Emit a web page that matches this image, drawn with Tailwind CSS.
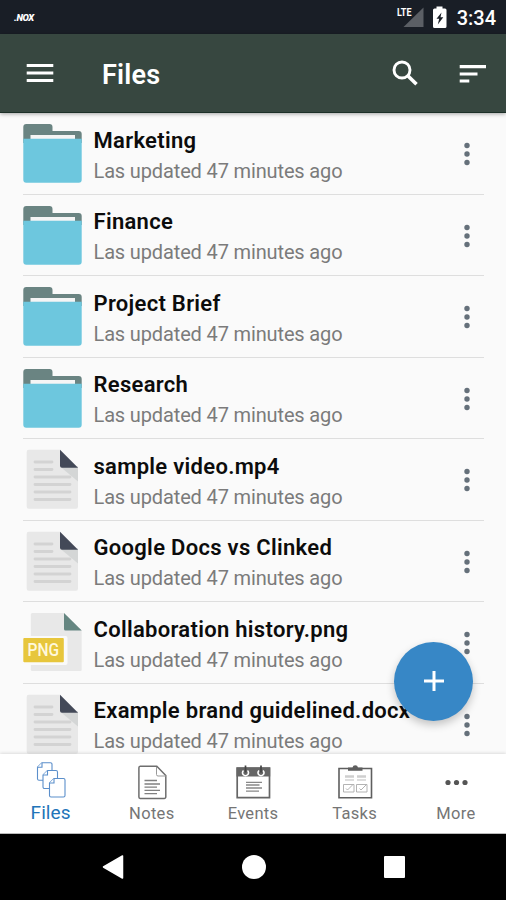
<!DOCTYPE html>
<html lang="en">
<head>
  <meta charset="UTF-8" />
  <meta name="viewport" content="width=device-width, initial-scale=1.0" />
  <title>Files</title>
  <script src="https://cdn.jsdelivr.net/npm/@tailwindcss/browser@4"></script>
</head>

<body class="bg-black">

<!-- shared file icons -->
<svg class="hidden">
  <symbol id="folder" viewBox="0 0 60 60">
    <path d="M.3 20V4a3 3 0 0 1 3-3H26.500a3 3 0 0 1 3 3v4H55.700a3 3 0 0 1 3 3v9z" fill="#6a8482" />
    <path d="M7.500 12H52v6H7.500z" fill="#f5f5f5" />
    <path d="M.3 15.800H58.700V56.700a3 3 0 0 1-3 3H3.300a3 3 0 0 1-3-3z" fill="#6dc7de" />
  </symbol>
  <symbol id="doc" viewBox="0 0 60 60">
    <path d="M5.700.700H37L55 18.700V57.700a2 2 0 0 1-2 2H5.700a2 2 0 0 1-2-2v-55a2 2 0 0 1 2-2z" fill="#e8e8e8" />
    <path d="M37 17.500H55V32.500z" fill="#d4d6d6" />
    <path d="M37 .7 55 18.700H39a2 2 0 0 1-2-2z" fill="#434958" />
    <path d="M12 13h17M12 20.500h17M12 28h35M12 35.500h35M12 43h35M12 50.500h35" stroke="#d3d3d3" stroke-width="2.800" stroke-linecap="round" />
  </symbol>
  <symbol id="png" viewBox="0 0 60 60">
    <path d="M9.300.900H41L58.700 18.600V57.500a1.500 1.500 0 0 1-1.500 1.500H9.300a1.500 1.500 0 0 1-1.500-1.500V2.400A1.500 1.500 0 0 1 9.300.900z" fill="#e8e8e8" />
    <path d="M41 .9 58.700 18.600H42.500a1.500 1.500 0 0 1-1.500-1.500z" fill="#658681" />
    <path d="M0 24H42.500a2 2 0 0 1 2 2V51a2 2 0 0 1-2 2H0z" fill="#fafafa" />
    <rect x=".3" y="26" width="40.500" height="24.200" rx="1" fill="#e7c63c" />
    <text x="4.500" y="44.300" textLength="31.500" lengthAdjust="spacingAndGlyphs" font-family="Roboto, sans-serif" font-size="17.500" font-weight="500" fill="#fff8dc">PNG</text>
  </symbol>
</svg>

<div class="w-[506px] h-[900px] flex flex-col overflow-hidden relative bg-[#fafafa] font-[Roboto,sans-serif]">

  <!-- status bar -->
  <div class="h-[34px] shrink-0 bg-[#191e26] flex items-center text-white pl-[14px] pr-[10px]">
    <span class="text-[9.5px] font-black italic leading-none tracking-[-0.4px] pt-px">.NOX</span>
    <svg class="ml-auto" width="29" height="34" viewBox="0 0 29 34">
      <path d="M27.500 7.500V27H7.500z" fill="#5b5f65" />
      <text x="1" y="16" textLength="14.500" lengthAdjust="spacingAndGlyphs" font-family="Roboto, sans-serif" font-size="11.500" font-weight="700" fill="#fff">LTE</text>
    </svg>
    <svg class="ml-[7px]" width="16" height="34" viewBox="0 0 16 34">
      <path d="M4.500 6.500h6v2H13a1.500 1.500 0 0 1 1.500 1.500v16.500A1.500 1.500 0 0 1 13 28H2.500A1.500 1.500 0 0 1 1 26.500V10a1.500 1.500 0 0 1 1.500-1.500h2z" fill="#fff" />
      <path d="M9.500 12.500 4.500 18.700H7.200L5.800 24.500 11.300 17.200H8.500z" fill="#191e26" />
    </svg>
    <span class="ml-[9px] text-[20px] font-medium leading-none pt-0.5">3:34</span>
  </div>

  <!-- app bar -->
  <header class="h-[79px] shrink-0 bg-[#374740] border-b border-[#1d3028] shadow-[0_1px_4px_rgba(0,0,0,0.35)] relative flex items-center text-white">
    <svg class="ml-[26px]" width="28" height="24" viewBox="0 0 28 24">
      <path d="M.7 4.500H27.300M.7 12H27.300M.7 19.500H27.300" stroke="#fff" stroke-width="3" />
    </svg>
    <h1 class="ml-[48px] text-[27px] font-semibold leading-none tracking-[0.2px] pt-[5px]">Files</h1>
    <svg class="ml-auto mt-0.5" width="30" height="30" viewBox="0 0 30 30">
      <circle cx="11" cy="11" r="8" fill="none" stroke="#fff" stroke-width="2.900" />
      <path d="m16.800 16.800 8.700 8.400" stroke="#fff" stroke-width="3.600" />
    </svg>
    <svg class="ml-[38px] mr-[19px] mt-px" width="28" height="24" viewBox="0 0 28 24">
      <path d="M.7 4.700H27M.7 12H18.500M.7 19H10.300" stroke="#fff" stroke-width="3.200" />
    </svg>
  </header>

  <!-- file list -->
  <main id="fileList" class="h-[641px] shrink-0 overflow-hidden"></main>

  <!-- tabs -->
  <nav class="h-[80px] shrink-0 bg-white grid grid-cols-5 shadow-[0_-1px_3px_rgba(0,0,0,0.12)] relative text-[#757575] text-[16.500px] tracking-[0.3px] text-center border-b border-[#bbb]">
    <div class="flex flex-col items-center pt-2 text-[#2174b9]">
      <svg width="36" height="38" viewBox="0 0 36 38" fill="#fff" stroke="#5b8fcb" stroke-width="1.100">
        <path d="M9 .8h8.500a1.500 1.500 0 0 1 1.500 1.500v16H6A1.500 1.500 0 0 1 4.500 17V5.300z" /><path d="M9 .8v4.500H4.500" />
        <path d="M14.500 8.500H23a1.500 1.500 0 0 1 1.500 1.500v16.500h-13A1.500 1.500 0 0 1 10 25V13z" /><path d="M14.500 8.500V13H10" />
        <path d="M21 16.500h9.500a1.500 1.500 0 0 1 1.500 1.500v15.500a1.500 1.500 0 0 1-1.500 1.500H18a1.500 1.500 0 0 1-1.500-1.500V21z" /><path d="M21 16.500V21h-4.500" />
      </svg>
      <span class="text-[19px] leading-[26px] tracking-[0.1px]">Files</span>
    </div>
    <div class="flex flex-col items-center pt-2">
      <svg width="36" height="38" viewBox="0 0 36 38" fill="none" stroke="#6e6e6e">
        <path d="M6.200 4.200H22.800L31.800 13.500V35a1.500 1.500 0 0 1-1.500 1.500H6.200A1.500 1.500 0 0 1 4.900 35V5.700A1.500 1.500 0 0 1 6.200 4.200z" stroke-width="1.500" />
        <path d="M22.500 5v7.500a1.500 1.500 0 0 0 1.500 1.500h8" stroke="#999" />
        <path d="M10.500 18.500h12.500M10.500 22h15.500M10.500 25.200h12.500M10.500 28.400h15.500M10.500 31.600h12.500" stroke="#808080" stroke-width="1.300" />
      </svg>
      <span class="leading-[26px] mt-px">Notes</span>
    </div>
    <div class="flex flex-col items-center pt-2">
      <svg width="38" height="38" viewBox="0 0 38 38" fill="none" stroke="#666">
        <path d="M3.200 6h32.300v29.700H3.200z" stroke-width="1.700" />
        <path d="M2.500 5.500h33.700v9H2.500z" fill="#666" stroke="none" />
        <path d="M9.500 8.500a3 3 0 1 0 4 0M25 8.500a3 3 0 1 0 4 0" stroke="#fff" stroke-width="1.600" />
        <path d="M11.500 3.500v7M27 3.500v7" stroke="#444" stroke-width="1.700" />
        <path d="M12 20.300h16M12 23h13.500M12 26h16M12 29.200h13" stroke="#888" stroke-width="1.300" />
      </svg>
      <span class="leading-[26px] mt-px">Events</span>
    </div>
    <div class="flex flex-col items-center pt-2 pl-px">
      <svg width="36" height="38" viewBox="0 0 36 38" fill="none" stroke="#5e5e5e">
        <path d="M2 6.500h32.500v29.300H2z" stroke-width="1.600" />
        <path d="M11 8.800V5.500h4.500a2.800 2.800 0 0 1 5.500 0h4.500V8.800z" fill="#5e5e5e" stroke="none" />
        <path d="M8 14.500h9M20 14.500h9" stroke="#cfcfcf" stroke-width="2.500" />
        <path d="M8 18h9M20 18h9" stroke="#dedede" stroke-width="2" />
        <path d="M6.500 22.500h10.500v7.500H6.500zM19.500 22.500H30v7.500H19.500zM9 26.500l1.500 1.500 5-5M22.500 26.500l1.500 1.500 5-5" stroke="#aaa" stroke-width=".9" />
      </svg>
      <span class="leading-[26px] mt-px">Tasks</span>
    </div>
    <div class="flex flex-col items-center pt-2 pl-px">
      <svg width="36" height="38" viewBox="0 0 36 38" fill="#555">
        <circle cx="10" cy="20.500" r="2.600" /><circle cx="18.500" cy="20.500" r="2.600" /><circle cx="27" cy="20.500" r="2.600" />
      </svg>
      <span class="leading-[26px] mt-px">More</span>
    </div>
  </nav>

  <!-- system navigation -->
  <div class="flex-1 bg-black flex items-start justify-between px-[102px] pt-5">
    <svg width="24" height="26" viewBox="0 0 24 26"><path d="M20.500 2v22L1.500 13z" fill="#fff" stroke="#fff" stroke-width="1.500" stroke-linejoin="round" /></svg>
    <span class="size-[24px] rounded-full bg-white mt-px -ml-px"></span>
    <span class="size-[21.500px] rounded-[1px] bg-white mt-[2px] mr-[-1px]"></span>
  </div>

  <button class="absolute left-[394px] top-[641.5px] size-[79px] rounded-full bg-[#3787c6] shadow-[0_4px_8px_rgba(0,0,0,0.22)] flex items-center justify-center">
    <svg width="22" height="22" viewBox="0 0 22 22"><path d="M11 1v20M1 11h20" stroke="#fff" stroke-width="3" /></svg>
  </button>
</div>

<script>
const files = [
  { name: 'Marketing', icon: 'folder' },
  { name: 'Finance', icon: 'folder' },
  { name: 'Project Brief', icon: 'folder' },
  { name: 'Research', icon: 'folder' },
  { name: 'sample video.mp4', icon: 'doc' },
  { name: 'Google Docs vs Clinked', icon: 'doc' },
  { name: 'Collaboration history.png', icon: 'png' },
  { name: 'Example brand guidelined.docx', icon: 'doc' }
];

document.getElementById('fileList').innerHTML = files.map(f => `
  <div class="h-[81.5px] ml-[23px] mr-[22px] border-b border-[#dedede] flex">
    <svg class="mt-[10.3px] shrink-0" width="60" height="60"><use href="#${f.icon}" /></svg>
    <div class="ml-[10.500px] flex-1 whitespace-nowrap">
      <div class="mt-[12.9px] text-[22px] leading-[30px] tracking-[0.3px] font-semibold text-[#0c0c0c]">${f.name}</div>
      <div class="text-[20px] leading-[30px] tracking-[-0.14px] text-[#7b7b7b]">Las updated 47 minutes ago</div>
    </div>
    <svg class="mt-[28px] mr-[12px] shrink-0" width="10" height="26" viewBox="0 0 10 26" fill="#65707a">
      <circle cx="5" cy="4.500" r="2.700" /><circle cx="5" cy="13" r="2.700" /><circle cx="5" cy="21.500" r="2.700" />
    </svg>
  </div>`).join('');
</script>

</body>
</html>
